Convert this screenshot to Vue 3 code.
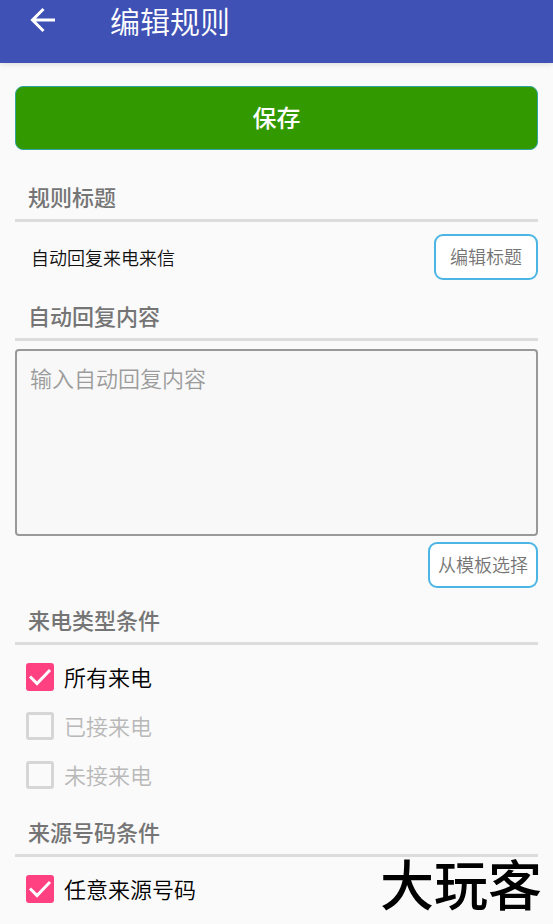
<script setup>
import { ref, reactive } from 'vue'

const title = ref('自动回复来电来信')
const content = ref('')
const callTypes = reactive([
  { id: 'call-all', label: '所有来电', checked: true, disabled: false },
  { id: 'call-answered', label: '已接来电', checked: false, disabled: true },
  { id: 'call-missed', label: '未接来电', checked: false, disabled: true },
])
const sources = reactive([
  { id: 'source-any', label: '任意来源号码', checked: true, disabled: false },
])
const groups = [
  { name: '来电类型条件', items: callTypes },
  { name: '来源号码条件', items: sources },
]
</script>

<template>
  <div class="screen">
    <header class="toolbar">
      <button class="back" type="button" aria-label="返回">
        <svg viewBox="0 0 26 26" width="26" height="26" fill="none" stroke="#fff" stroke-width="3">
          <path d="M25 13H3M13.500 2L2.500 13L13.500 24" />
        </svg>
      </button>
      <h1>编辑规则</h1>
    </header>

    <main class="form">
      <button class="save" type="button">保存</button>

      <section>
        <h2>规则标题</h2>
        <div class="title-row">
          <span>{{ title }}</span>
          <button class="small-button edit" type="button">编辑标题</button>
        </div>
      </section>

      <section>
        <h2><label for="reply">自动回复内容</label></h2>
        <div class="reply">
          <textarea id="reply" v-model="content" placeholder="输入自动回复内容"></textarea>
          <button class="small-button" type="button">从模板选择</button>
        </div>
      </section>

      <section v-for="group in groups" :key="group.name">
        <h2>{{ group.name }}</h2>
        <div class="options">
          <label
            v-for="item in group.items"
            :key="item.id"
            class="option"
            :class="{ disabled: item.disabled }"
            :for="item.id"
          >
            <span class="box">
              <input :id="item.id" v-model="item.checked" type="checkbox" :disabled="item.disabled" />
              <svg v-if="item.checked" viewBox="0 0 28 28" fill="none" stroke="#fff" stroke-width="3">
                <path d="M4 13.500L11 20.500L24 7" />
              </svg>
            </span>
            <span class="option-text">{{ item.label }}</span>
          </label>
        </div>
      </section>
    </main>

    <div class="watermark">大玩客</div>
  </div>
</template>

<style>
body {
  background: #fafafa;
}
</style>

<style scoped>
.screen {
  position: relative;
  min-height: 100vh;
  box-sizing: border-box;
  background: #fafafa;
  color: #111;
  font-family: "Noto Sans CJK SC", sans-serif;
  font-size: 22px;
  font-weight: 350;
}

button,
textarea {
  box-sizing: border-box;
  margin: 0;
  font-family: inherit;
  font-weight: inherit;
}

.toolbar {
  display: flex;
  align-items: center;
  gap: 54px;
  height: 63px;
  box-sizing: border-box;
  padding: 0 30px 23px;
  background: #3f51b5;
  box-shadow: 0 1px 6px rgba(0, 0, 0, 0.14);
  color: #fff;
}

.back {
  display: flex;
  padding: 0;
  border: 0;
  background: none;
}

h1 {
  margin: 0;
  font-size: 30px;
  font-weight: 350;
  line-height: 40px;
}

.form {
  padding: 23px 15px 8px;
}

.save {
  display: block;
  width: 100%;
  height: 64px;
  margin-bottom: 26px;
  padding: 0 0 4px;
  border: 1px solid #33a5a0;
  border-radius: 8px;
  background: #339900;
  color: #fff;
  font-size: 24px;
  font-weight: 500;
}

h2 {
  margin: 0;
  padding: 0 0 2px 13px;
  border-bottom: 3px solid #dcdcdc;
  color: #757575;
  font-size: 22px;
  font-weight: 500;
  line-height: 41px;
}

.title-row {
  display: flex;
  align-items: center;
  justify-content: space-between;
  padding: 12px 0 15px 16px;
  font-size: 18px;
}

.small-button {
  height: 46px;
  padding: 0 8px 2px;
  border: 2px solid #4cb5e4;
  border-radius: 9px;
  background: #fff;
  color: #757575;
  font-size: 18px;
}

.edit {
  padding: 0 14px 2px;
}

.reply {
  display: flex;
  flex-direction: column;
  align-items: flex-end;
  gap: 6px;
  padding: 8px 0 11px;
}

textarea {
  display: block;
  width: 100%;
  height: 187px;
  padding: 10px 13px;
  border: 2px solid #999;
  border-radius: 4px;
  background: #f8f8f8;
  color: #111;
  font-size: 22px;
  line-height: 32px;
  resize: none;
}

textarea::placeholder {
  color: #9c9c9c;
  opacity: 1;
}

.options {
  padding: 7px 0 12px;
}

.option {
  display: flex;
  align-items: center;
  gap: 10px;
  height: 49px;
  padding-left: 11px;
  color: #000;
}

.option.disabled {
  color: #b8b8b8;
}

.option-text {
  padding-bottom: 2px;
}

.box {
  position: relative;
  width: 28px;
  height: 28px;
}

.box input {
  display: block;
  appearance: none;
  width: 28px;
  height: 28px;
  margin: 0;
  border: 3px solid #d6d6d6;
  border-radius: 3px;
}

.box input:checked {
  border-color: #ff4081;
  background: #ff4081;
}

.box svg {
  position: absolute;
  inset: 0;
  pointer-events: none;
}

.watermark {
  position: absolute;
  right: 11px;
  bottom: 10px;
  color: #000;
  font-size: 54px;
  font-weight: 500;
  line-height: 80px;
  pointer-events: none;
}
</style>
